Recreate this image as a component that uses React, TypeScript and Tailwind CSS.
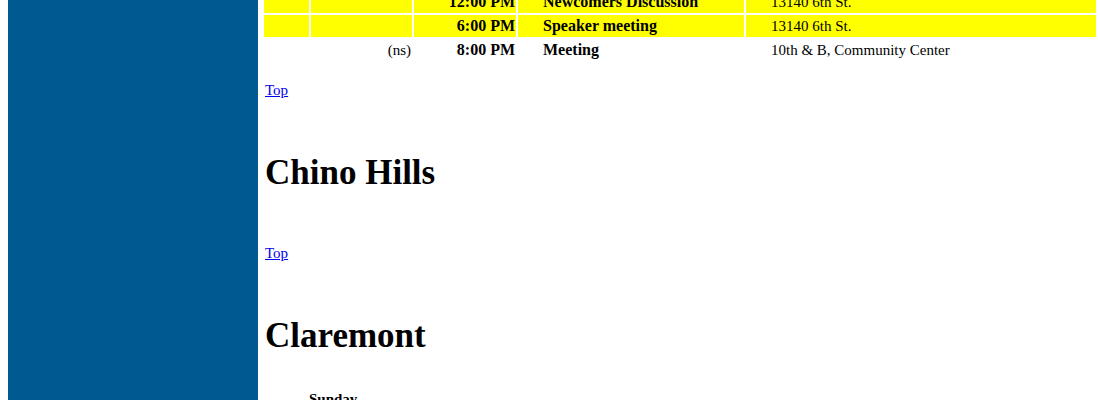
type Meeting = {
  note: string;
  time: string;
  name: string;
  place: string;
  highlight: boolean;
};

const meetings: Meeting[] = [
  { note: "", time: "12:00 PM", name: "Newcomers Discussion", place: "13140 6th St.", highlight: true },
  { note: "", time: "6:00 PM", name: "Speaker meeting", place: "13140 6th St.", highlight: true },
  { note: "(ns)", time: "8:00 PM", name: "Meeting", place: "10th & B, Community Center", highlight: false },
];

function MeetingRow({ meeting }: { meeting: Meeting }) {
  return (
    <tr className={meeting.highlight ? "h-[22px] *:bg-[#ffff00]" : "h-[22px]"}>
      <td className="p-px" />
      <td className="p-px text-right">{meeting.note}</td>
      <td className="px-px pt-px pb-[3px] text-right text-[16px] leading-[17px] font-bold">{meeting.time}</td>
      <td className="pt-px pb-[3px] pl-[25px] text-[16px] leading-[17px] font-bold">{meeting.name}</td>
      <td className="py-px pl-[25px]">{meeting.place}</td>
    </tr>
  );
}

function TopLink() {
  return (
    <p className="px-[7px]">
      <a href="#top" className="text-[#0000ee] underline">
        Top
      </a>
    </p>
  );
}

function CityHeading({ children }: { children: string }) {
  return <h2 className="mt-[53px] px-[7px] text-[35px] leading-[41px] font-bold">{children}</h2>;
}

export default function App() {
  return (
    <div
      id="top"
      className="flex h-screen overflow-hidden bg-white pl-2 font-['Liberation_Serif','Times_New_Roman',serif] text-[15px] leading-[17px] text-black"
    >
      <aside className="w-[250px] shrink-0 bg-[#005991]" />
      <main className="min-w-0 grow">
        <div className="-mt-[11px] pl-1">
          <table className="w-full table-fixed border-separate border-spacing-[2px]">
            <colgroup>
              <col className="w-[45px]" />
              <col className="w-[101px]" />
              <col className="w-[102px]" />
              <col className="w-[226px]" />
              <col />
            </colgroup>
            <tbody>
              {meetings.map((meeting) => (
                <MeetingRow key={meeting.time} meeting={meeting} />
              ))}
            </tbody>
          </table>
        </div>
        <div className="pt-[19px]">
          <TopLink />
        </div>
        <CityHeading>Chino Hills</CityHeading>
        <div className="pt-[52px]">
          <TopLink />
        </div>
        <CityHeading>Claremont</CityHeading>
        <h3 className="mt-[35px] pl-[51px] font-bold">Sunday</h3>
      </main>
    </div>
  );
}
